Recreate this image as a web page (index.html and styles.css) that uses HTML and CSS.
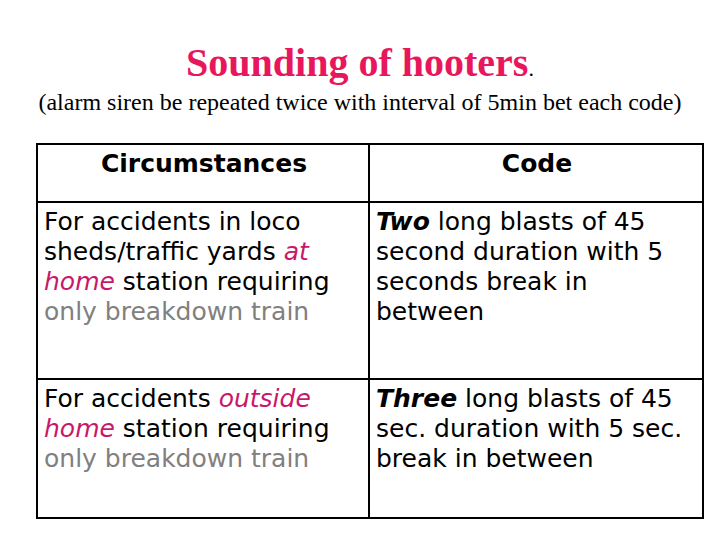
FILE: index.html
```html
<!DOCTYPE html>
<html>
<head>
<meta charset="utf-8">
<link rel="stylesheet" href="styles.css">
</head>
<body>
<div class="page">
  <h1 class="title">Sounding of hooters<span class="dot">.</span></h1>
  <p class="subtitle">(alarm siren be repeated twice with interval of 5min bet each code)</p>
  <table class="codes">
    <tr class="head">
      <th class="c1">Circumstances</th>
      <th class="c2">Code</th>
    </tr>
    <tr class="r1">
      <td>For accidents in loco sheds/traffic yards <em>at home</em> station requiring <span class="grey">only breakdown train</span></td>
      <td><b>Two</b> long blasts of 45 second duration with 5 seconds break in between</td>
    </tr>
    <tr class="r2">
      <td>For accidents <em>outside home</em> station requiring <span class="grey">only breakdown train</span></td>
      <td><b>Three</b> long blasts of 45 sec. duration with 5 sec. break in between</td>
    </tr>
  </table>
</div>
</body>
</html>
```
FILE: styles.css
```css
html, body { margin: 0; padding: 0; background: #fff; }
.page { width: 720px; height: 540px; position: relative; }
.title {
  margin: 0;
  padding-top: 41px;
  text-align: center;
  font-family: "Liberation Serif", serif;
  font-weight: bold;
  font-size: 40px;
  line-height: 44px;
  color: #e8175d;
}
.title .dot { font-size: 22px; font-weight: normal; color: #000; }
.subtitle {
  margin: -3px 0 0 0;
  text-align: center;
  font-family: "Liberation Serif", serif;
  font-size: 24px;
  line-height: 28px;
  color: #000;
}
.codes {
  margin: 27px 0 0 36px;
  border-collapse: collapse;
  table-layout: fixed;
  width: 668px;
  font-family: "DejaVu Sans", Verdana, sans-serif;
  font-size: 25px;
  line-height: 30px;
  color: #000;
}
.codes th, .codes td {
  border: 2px solid #000;
  vertical-align: top;
  padding: 4px 4px 0 6px;
  text-align: left;
}
.codes th { text-align: center; font-weight: bold; }
.c1 { width: 320px; }
.head { height: 58px; }
.r1 { height: 177px; }
.r2 { height: 139px; }
.codes em { color: #c8186a; font-style: italic; }
.grey { color: #808080; }
.codes b { font-style: italic; font-weight: bold; }
```
